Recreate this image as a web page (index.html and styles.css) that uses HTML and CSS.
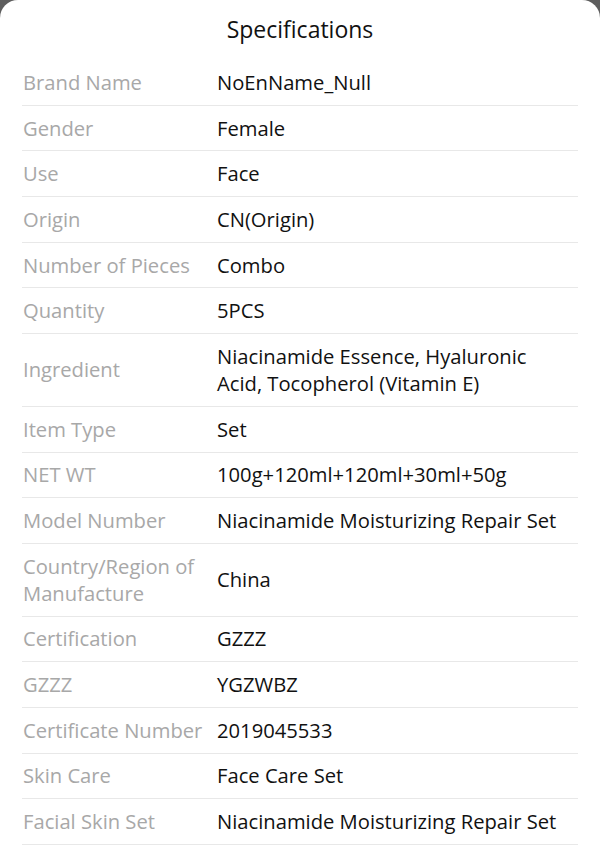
FILE: index.html
```html
<!DOCTYPE html>
<html>
<head>
<meta charset="utf-8">
<link rel="stylesheet" href="styles.css">
</head>
<body>
<div class="sheet">
  <h1 class="title">Specifications</h1>
  <div class="specs">
    <div class="row"><div class="label">Brand Name</div><div class="value">NoEnName_Null</div></div>
    <div class="row"><div class="label">Gender</div><div class="value">Female</div></div>
    <div class="row"><div class="label">Use</div><div class="value">Face</div></div>
    <div class="row"><div class="label">Origin</div><div class="value">CN(Origin)</div></div>
    <div class="row"><div class="label">Number of Pieces</div><div class="value">Combo</div></div>
    <div class="row"><div class="label">Quantity</div><div class="value">5PCS</div></div>
    <div class="row"><div class="label">Ingredient</div><div class="value">Niacinamide Essence, Hyaluronic Acid, Tocopherol (Vitamin E)</div></div>
    <div class="row"><div class="label">Item Type</div><div class="value">Set</div></div>
    <div class="row"><div class="label">NET WT</div><div class="value">100g+120ml+120ml+30ml+50g</div></div>
    <div class="row"><div class="label">Model Number</div><div class="value">Niacinamide Moisturizing Repair Set</div></div>
    <div class="row"><div class="label">Country/Region of Manufacture</div><div class="value">China</div></div>
    <div class="row"><div class="label">Certification</div><div class="value">GZZZ</div></div>
    <div class="row"><div class="label">GZZZ</div><div class="value">YGZWBZ</div></div>
    <div class="row"><div class="label">Certificate Number</div><div class="value">2019045533</div></div>
    <div class="row"><div class="label">Skin Care</div><div class="value">Face Care Set</div></div>
    <div class="row"><div class="label">Facial Skin Set</div><div class="value">Niacinamide Moisturizing Repair Set</div></div>
  </div>
</div>
</body>
</html>
```
FILE: styles.css
```css
html, body {
  margin: 0;
  padding: 0;
  background: #5e5e5e;
}
body {
  font-family: "Open Sans", "Noto Sans", sans-serif;
  overflow: hidden;
}
.sheet {
  background: #fff;
  border-radius: 18px 18px 0 0;
  min-height: 847px;
}
.title {
  margin: 0;
  height: 60px;
  line-height: 58px;
  text-align: center;
  font-size: 23px;
  font-weight: 400;
  color: #111;
}
.specs {
  padding: 0 22px;
}
.row {
  display: flex;
  align-items: center;
  padding: 8.85px 0;
  border-bottom: 1px solid #e8e8e8;
  font-size: 20.2px;
  line-height: 27px;
}
.label {
  flex: 0 0 194px;
  padding-left: 1px;
  color: #a8a8a8;
}
.value {
  flex: 1;
  min-width: 0;
  padding-right: 12px;
  color: #111;
}
```
